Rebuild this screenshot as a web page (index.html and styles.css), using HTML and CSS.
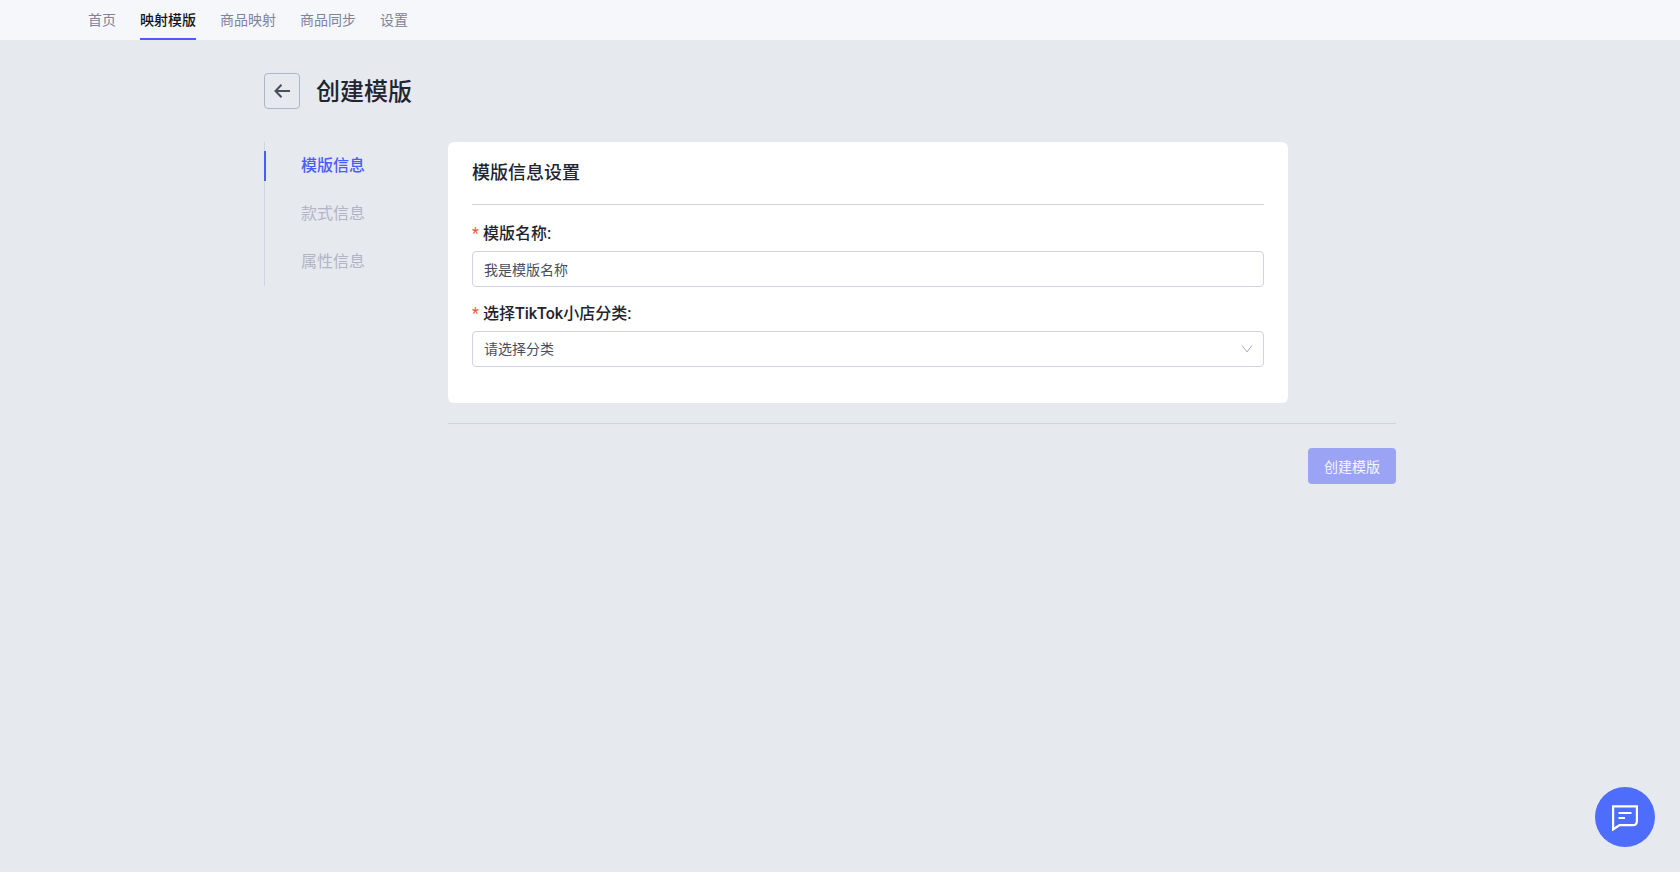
FILE: index.html
```html
<!DOCTYPE html>
<html lang="zh-CN">
<head>
    <meta charset="UTF-8">
    <meta name="viewport" content="width=device-width, initial-scale=1.0">
    <title>创建模版</title>
    <link rel="stylesheet" href="styles.css">
</head>
<body>
    <header class="top-bar">
        <nav class="top-nav">
            <a href="#">首页</a>
            <a href="#" class="active">映射模版</a>
            <a href="#">商品映射</a>
            <a href="#">商品同步</a>
            <a href="#">设置</a>
        </nav>
    </header>

    <div class="page">
        <div class="page-header">
            <button type="button" class="back-button" aria-label="返回">
                <svg width="16" height="14" viewBox="0 0 16 14" fill="none" stroke="currentColor" stroke-width="2">
                    <path d="M7.5 0.8L1.5 7L7.5 13.2M1.5 7H16"/>
                </svg>
            </button>
            <h1>创建模版</h1>
        </div>

        <div class="page-body">
            <nav class="side-nav">
                <a href="#info" class="active">模版信息</a>
                <a href="#style">款式信息</a>
                <a href="#attributes">属性信息</a>
            </nav>

            <form class="template-form">
                <section class="card" id="info">
                    <h2>模版信息设置</h2>
                    <div class="field">
                        <label for="template-name">模版名称:</label>
                        <input type="text" id="template-name" value="我是模版名称">
                    </div>
                    <div class="field">
                        <label for="category">选择TikTok小店分类:</label>
                        <div class="select-box">
                            <select id="category">
                                <option>请选择分类</option>
                            </select>
                            <svg width="12" height="12" viewBox="0 0 12 12" fill="none" stroke="currentColor">
                                <path d="M1 2.5L6 9L11 2.5"/>
                            </svg>
                        </div>
                    </div>
                </section>
                <div class="form-actions">
                    <button type="submit" class="submit-button" disabled>创建模版</button>
                </div>
            </form>
        </div>
    </div>

    <button type="button" class="chat-button" aria-label="在线客服">
        <svg width="26" height="28" viewBox="0 0 26 28" fill="none" stroke="currentColor" stroke-width="2.2">
            <path d="M1.1 3.3H24.9V18C24.900 20.800 23.500 22.200 21 22.200H7.500L1.100 26.500Z"/>
            <path d="M6.500 10H19.500M6.500 15H13"/>
        </svg>
    </button>
</body>
</html>
```
FILE: styles.css
```css
* {
    box-sizing: border-box;
}

body {
    margin: 0;
    min-height: 100vh;
    background-color: #e6e9ee;
    color: #22242f;
    font-family: Roboto, "Noto Sans CJK SC", sans-serif;
    font-size: 14px;
}

a {
    text-decoration: none;
}

button,
input,
select {
    font-family: inherit;
    font-size: 14px;
}

.top-bar {
    background-color: #f5f7fb;
    padding: 0 88px;
}

.top-nav {
    display: flex;
    gap: 24px;
}

.top-nav a {
    height: 40px;
    line-height: 40px;
    color: #7e839b;
}

.top-nav a.active {
    color: #12141a;
    font-weight: 500;
    box-shadow: inset 0 -2px #4c5cf8;
}

.page {
    max-width: 1152px;
    margin: 0 auto;
    padding: 32px 20px 40px 0;
}

.page-header {
    display: flex;
    align-items: center;
    gap: 16px;
    margin-bottom: 32px;
}

.page-header h1 {
    margin: 0;
    padding-top: 2px;
    font-size: 24px;
    line-height: 36px;
    font-weight: 500;
}

.back-button {
    display: flex;
    align-items: center;
    justify-content: center;
    width: 36px;
    height: 36px;
    padding: 0;
    border: 1px solid #b0b4c8;
    border-radius: 4px;
    background: transparent;
    color: #4a4e5e;
    cursor: pointer;
}

.page-body {
    display: flex;
    align-items: flex-start;
}

.side-nav {
    flex: 0 0 184px;
    box-shadow: inset 1px 0 #cfd3e2;
}

.side-nav a {
    display: flex;
    align-items: center;
    height: 48px;
    color: #b2b5c6;
    font-size: 16px;
    line-height: 26px;
}

.side-nav a::before {
    content: "";
    width: 2px;
    height: 30px;
    margin-right: 35px;
}

.side-nav a.active {
    color: #4c5cf8;
    font-weight: 500;
}

.side-nav a.active::before {
    background-color: #4c5cf8;
}

.template-form {
    flex: 1;
    min-width: 0;
}

.card {
    max-width: 840px;
    padding: 16px 24px 36px;
    border-radius: 6px;
    background-color: #fff;
}

.card h2 {
    margin: 0 0 16px;
    padding-bottom: 16px;
    border-bottom: 1px solid #cfd0e2;
    font-size: 18px;
    line-height: 30px;
    font-weight: 500;
}

.field + .field {
    margin-top: 14px;
}

.field label {
    display: block;
    margin-bottom: 4px;
    font-size: 16px;
    line-height: 26px;
    font-weight: 500;
}

.field label::before {
    content: "*";
    margin-right: 4px;
    color: #f5593d;
    font-weight: 400;
}

.field input,
.field select {
    display: block;
    width: 100%;
    height: 36px;
    padding: 0 11px;
    border: 1px solid #cfd3e5;
    border-radius: 4px;
    background-color: #fff;
    color: #4a4e5e;
    appearance: none;
}

.select-box {
    position: relative;
}

.select-box svg {
    position: absolute;
    top: 12px;
    right: 11px;
    color: #a9adc2;
    pointer-events: none;
}

.form-actions {
    display: flex;
    justify-content: flex-end;
    margin-top: 20px;
    padding-top: 24px;
    border-top: 1px solid #cfd5e2;
}

.submit-button {
    height: 36px;
    padding: 0 16px;
    border: none;
    border-radius: 4px;
    background-color: #9ba3f5;
    color: #f5f6fe;
}

.chat-button {
    position: fixed;
    right: 25px;
    bottom: 25px;
    display: flex;
    align-items: center;
    justify-content: center;
    width: 60px;
    height: 60px;
    padding: 0;
    border: none;
    border-radius: 50%;
    background-color: #4f6dfc;
    color: #fff;
    cursor: pointer;
}
```
